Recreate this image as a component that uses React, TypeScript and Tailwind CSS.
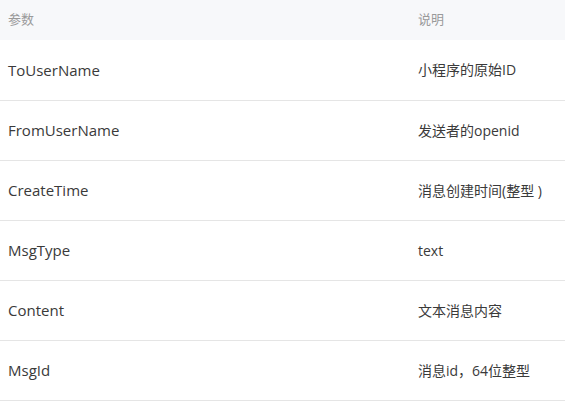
const rows = [
  { name: "ToUserName", desc: "小程序的原始ID" },
  { name: "FromUserName", desc: "发送者的openid" },
  { name: "CreateTime", desc: "消息创建时间(整型 )" },
  { name: "MsgType", desc: "text" },
  { name: "Content", desc: "文本消息内容" },
  { name: "MsgId", desc: "消息id，64位整型" },
];

const App = () => {
  return (
    <div
      className="w-[565px] h-[405px] overflow-hidden bg-white"
      style={{ fontFamily: '"Open Sans", "Noto Sans CJK SC", sans-serif' }}
    >
      <table className="w-[640px] border-collapse text-left">
        <thead>
          <tr className="h-[40px] bg-[#f7f8fa]">
            <th className="w-[410px] px-2 text-[13px] font-normal text-[#9a9a9a]">参数</th>
            <th className="px-2 text-[13px] font-normal text-[#9a9a9a]">说明</th>
          </tr>
        </thead>
        <tbody>
          {rows.map((r) => (
            <tr key={r.name} className="h-[60px] border-b border-[#e5e5e5]">
              <td className="px-2 text-[15px] text-[#3a3a3a]">{r.name}</td>
              <td className="px-2 text-[14px] text-[#3a3a3a]">{r.desc}</td>
            </tr>
          ))}
        </tbody>
      </table>
    </div>
  );
};

export default App;
